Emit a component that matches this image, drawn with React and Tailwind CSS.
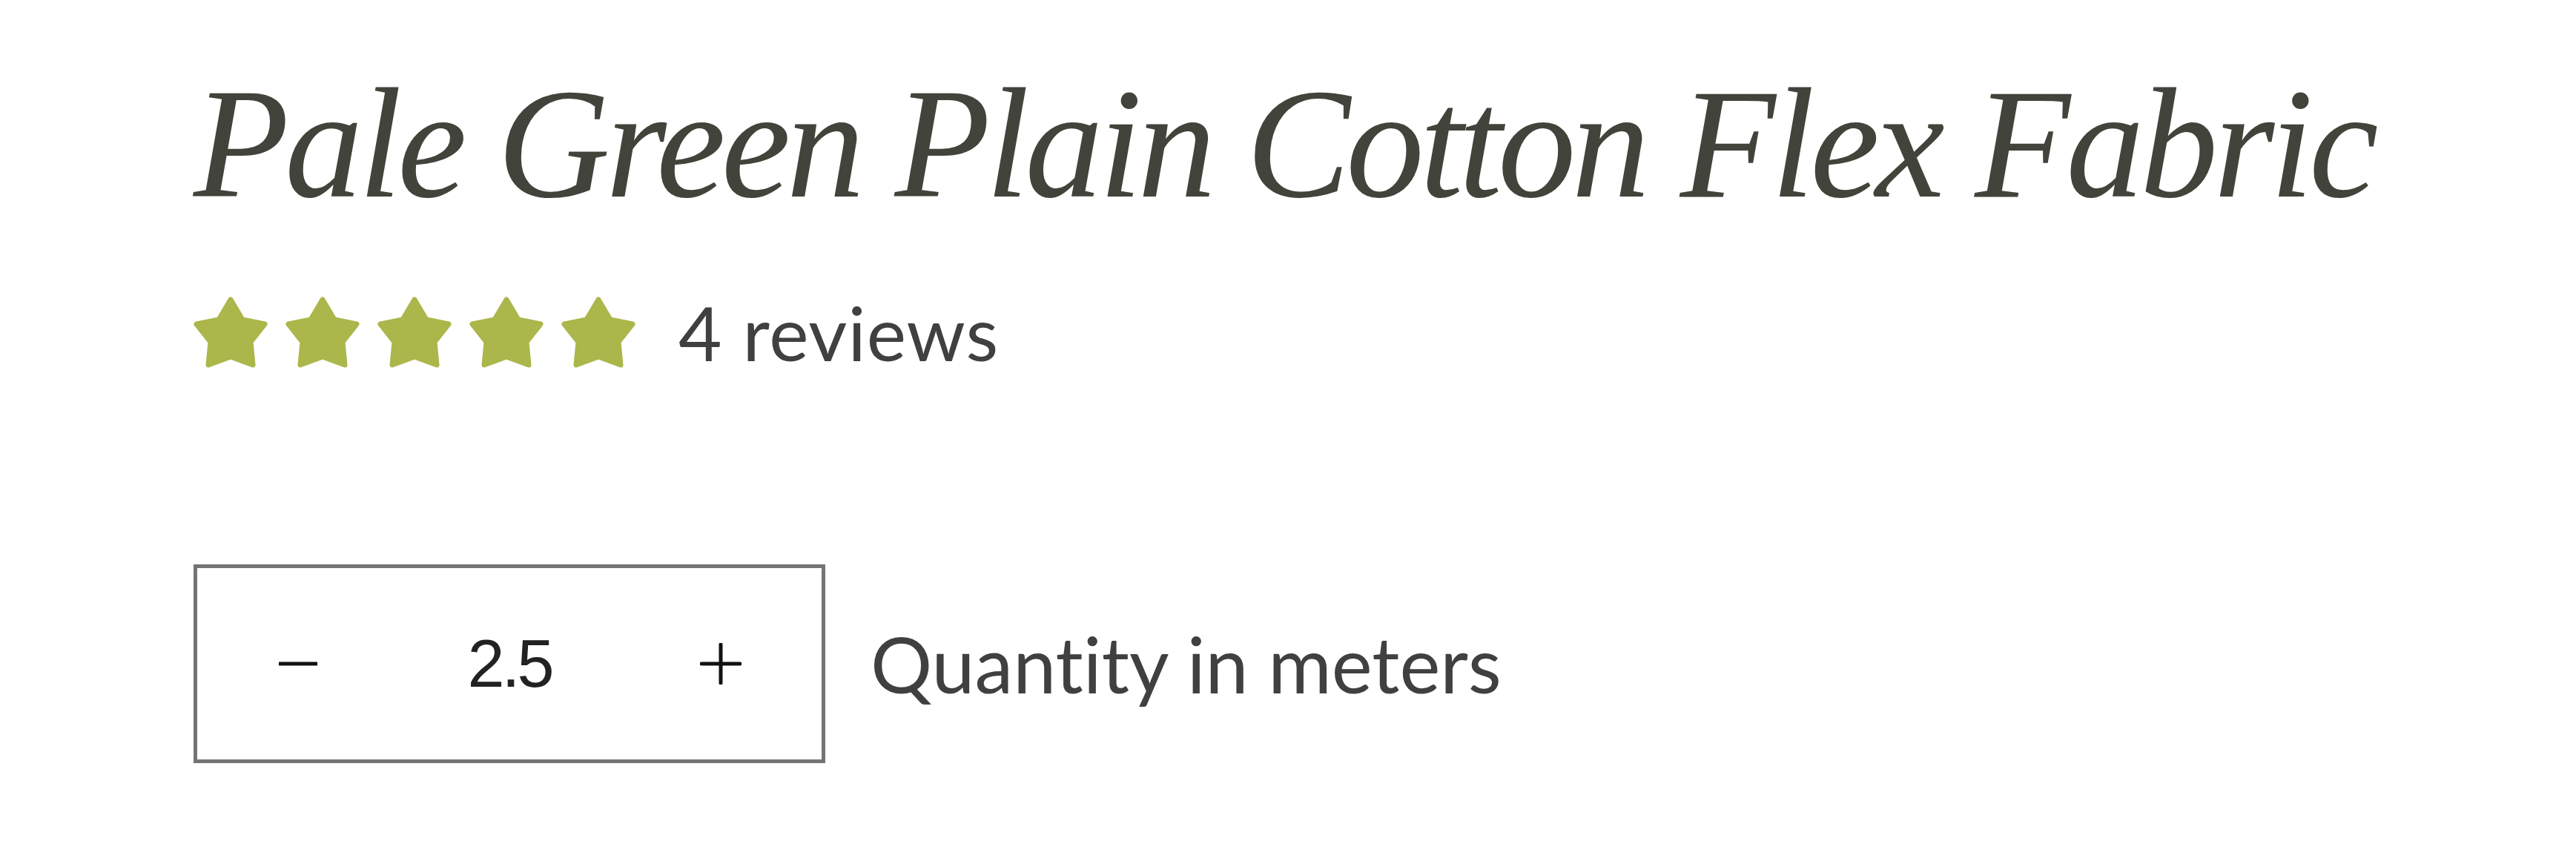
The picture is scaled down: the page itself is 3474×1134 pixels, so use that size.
const stars = [0, 1, 2, 3, 4];

function Star() {
  return (
    <svg viewBox="0 0 100 97" className="h-[97px] w-[100px] shrink-0">
      <polygon
        points="50,4 66,31 96,37 77,61 80,92 50,81 20,92 23,61 4,37 34,31"
        fill="#abb64b"
        stroke="#abb64b"
        strokeWidth="7"
        strokeLinejoin="round"
      />
    </svg>
  );
}

function QuantityInput({ value }) {
  return (
    <div className="flex h-[268px] w-[852px] items-stretch border-[5px] border-[#747474] bg-white">
      <button className="flex w-[272px] items-center justify-center" aria-label="Decrease quantity">
        <svg viewBox="0 0 52 6" className="h-[6px] w-[52px]">
          <line x1="1" y1="3" x2="51" y2="3" stroke="#111" strokeWidth="5" strokeLinecap="round" />
        </svg>
      </button>
      <input
        readOnly
        value={value}
        className="w-0 flex-1 bg-transparent text-center font-['Liberation_Sans',Arial,sans-serif] text-[90px] tracking-[-4px] text-[#222] outline-none"
      />
      <button className="flex w-[272px] items-center justify-center" aria-label="Increase quantity">
        <svg viewBox="0 0 56 56" className="h-[56px] w-[56px]">
          <line x1="2" y1="28" x2="54" y2="28" stroke="#111" strokeWidth="5" strokeLinecap="round" />
          <line x1="28" y1="2" x2="28" y2="54" stroke="#111" strokeWidth="5" strokeLinecap="round" />
        </svg>
      </button>
    </div>
  );
}

export default function App() {
  return (
    <div className="min-h-screen bg-white pl-[261px] pt-[89px] [font-variant-ligatures:none]">
      <h1 className="font-['Liberation_Serif',Georgia,serif] text-[211px] italic leading-none tracking-[-6px] text-[#42433a]">
        Pale Green Plain Cotton Flex Fabric
      </h1>

      <div className="mt-[98px] flex items-center">
        <div className="flex gap-[24px]">
          {stars.map((i) => (
            <Star key={i} />
          ))}
        </div>
        <span className="ml-[58px] font-['Lato',sans-serif] text-[101px] leading-none tracking-[1px] text-[#404040]">
          4 reviews
        </span>
      </div>

      <div className="mt-[262px] flex items-center">
        <QuantityInput value="2.5" />
        <label className="ml-[61px] font-['Lato',sans-serif] text-[104px] leading-none text-[#404040]">
          Quantity in meters
        </label>
      </div>
    </div>
  );
}
